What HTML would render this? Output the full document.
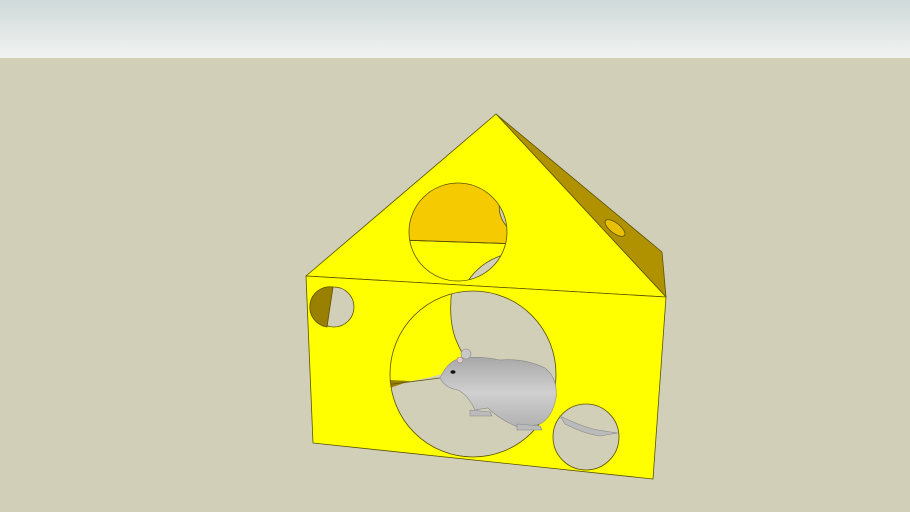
<!DOCTYPE html>
<html><head><style>html,body{margin:0;padding:0;width:910px;height:512px;overflow:hidden;background:#d2cfb9}</style></head>
<body>
<svg width="910" height="512" xmlns="http://www.w3.org/2000/svg">
<defs>
<linearGradient id="sky" x1="0" y1="0" x2="0" y2="1"><stop offset="0" stop-color="#cfd9d9"/><stop offset="1" stop-color="#f1f3f1"/></linearGradient>
<linearGradient id="mouse" x1="0" y1="0" x2="0" y2="1"><stop offset="0" stop-color="#a8a8a8"/><stop offset="0.5" stop-color="#d0d0d0"/><stop offset="1" stop-color="#b0b0b0"/></linearGradient>
<clipPath id="gh"><circle cx="458" cy="232" r="49"/></clipPath>
<clipPath id="bh"><circle cx="473" cy="374" r="83"/></clipPath>
</defs>
<rect width="910" height="58" fill="url(#sky)"/>
<rect y="58" width="910" height="454" fill="#d2cfb9"/>
<g stroke="#5a5200" stroke-width="0.8" stroke-linejoin="round">
<polygon points="496,114 662,252 666,297" fill="#b09200"/>
<ellipse cx="615" cy="228" rx="12" ry="5" transform="rotate(38 615 228)" fill="#e8c000"/>
<polygon points="496,114 666,297 306,276" fill="#ffff00"/>
<polygon points="306,276 666,297 653,479 313,443" fill="#ffff00"/>
<!-- gable hole -->
<g clip-path="url(#gh)">
<rect x="400" y="180" width="120" height="110" fill="#ffff00" stroke="none"/>
<polygon points="400,180 520,180 520,244 400,240" fill="#f5cb00"/>
<line x1="400" y1="240" x2="520" y2="244"/>
<path d="M500,200 Q496,218 512,232 L512,200Z" fill="#d2cfb9"/>
<path d="M466,284 Q478,264 500,256 L512,256 L512,290 L466,290Z" fill="#d2cfb9"/>
</g>
<circle cx="458" cy="232" r="49" fill="none"/>
<!-- left small hole -->
<circle cx="334" cy="307" r="20" fill="#d2cfb9"/>
<path d="M333,287 L327,327 A20,20 0 0 1 333,287Z" fill="#9a8000"/>
<!-- big hole -->
<g clip-path="url(#bh)">
<rect x="385" y="285" width="180" height="180" fill="#d2cfb9" stroke="none"/>
<path d="M452,288 Q448,320 456,340 Q462,355 470,364 L392,380 L380,380 L380,288Z" fill="#ffff00"/>
<path d="M385,378 L470,364 Q440,378 385,385Z" fill="#ffff00" stroke="none"/>
<path d="M390,380 L410,381 L390,388Z" fill="#9a8000" stroke="none"/>
<line x1="385" y1="385" x2="440" y2="378"/>
</g>
<circle cx="473" cy="374" r="83" fill="none"/>
<circle cx="586" cy="437" r="33" fill="#d2cfb9"/>
</g>
<g stroke="#888" stroke-width="0.6">
<path d="M560,416 Q585,428 598,430 Q610,432 618,433 L600,436 Q585,434 565,424Z" fill="#bbb"/>
<path d="M440,378 Q448,360 462,358 Q480,356 500,360 Q525,358 545,368 Q558,378 556,398 Q552,418 540,424 L520,428 Q500,420 488,408 L475,410 Q468,395 458,390 Q445,388 440,378Z" fill="url(#mouse)"/>
<circle cx="466" cy="354" r="5" fill="#c8c8c8"/>
<circle cx="460" cy="360" r="3" fill="#e8c8c8"/>
<path d="M470,410 L490,412 L492,416 L470,416Z" fill="#bbb"/>
<path d="M517,424 L540,426 L542,430 L517,430Z" fill="#bbb"/>
</g>
<ellipse cx="453" cy="372" rx="2.5" ry="1.8" fill="#111"/>
</svg>
</body></html>
